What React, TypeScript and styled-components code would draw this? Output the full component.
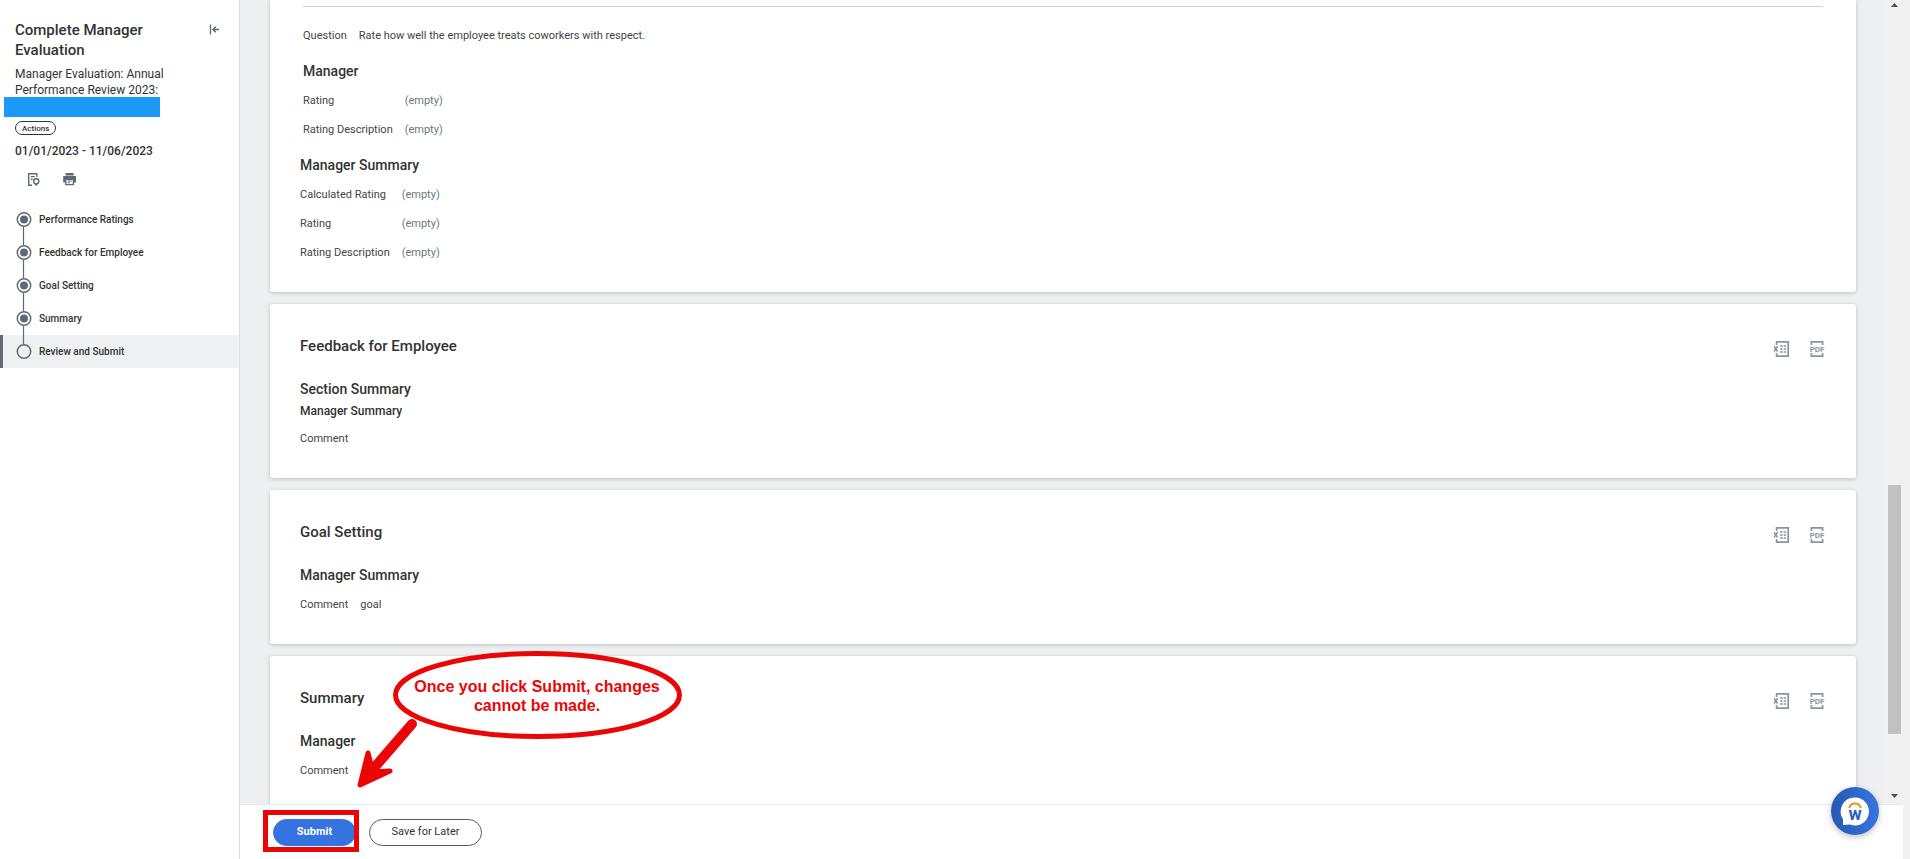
import React from "react";
import styled, { createGlobalStyle } from "styled-components";

const color = {
  ink: "#333333",
  label: "#444444",
  muted: "#6c7780",
  slate: "#5e6a75",
  icon: "#8a949e",
  canvas: "#eeeff1",
  track: "#f1f1f1",
  blue: "#3574e0",
  red: "#ea0606",
};

const GlobalStyle = createGlobalStyle`
  *, *::before, *::after { box-sizing: border-box; }
  body { margin: 0; background: #fff; color: ${color.ink}; font-family: Roboto, "Liberation Sans", sans-serif; }
  h1, h2, h3, h4, p, dl, dd, ol { margin: 0; padding: 0; }
  button { font-family: inherit; cursor: pointer; }
`;

const Shell = styled.div`
  display: grid;
  grid-template-columns: 240px minmax(0, 1fr) 7px;
  height: 100vh;
  overflow: hidden;
`;

/* ---------- sidebar ---------- */

const Sidebar = styled.aside`
  background: #fff;
  border-right: 1px solid #dcdee1;
`;

const Intro = styled.header`
  display: flex;
  flex-direction: column;
  align-items: flex-start;
  padding: 20px 16px 0 15px;
`;

const TitleRow = styled.div`
  display: flex;
  justify-content: space-between;
  align-self: stretch;
`;

const Title = styled.h1`
  width: 140px;
  font-size: 15px;
  font-weight: 500;
  line-height: 20px;
`;

const IconButton = styled.button`
  display: flex;
  width: 16px;
  height: 16px;
  padding: 0;
  border: 0;
  background: none;
  color: ${color.icon};
`;

const SideIconButton = styled(IconButton)`
  color: ${color.slate};
`;

const Subtitle = styled.p`
  margin-top: 6px;
  width: 160px;
  font-size: 12px;
  line-height: 16px;
`;

const Redaction = styled.div`
  width: 156px;
  height: 20px;
  margin: -1px 0 0 -11px;
  background: #1a9af5;
`;

const ActionsButton = styled.button`
  height: 14px;
  margin-top: 4px;
  padding: 0 6px;
  border: 1px solid ${color.ink};
  border-radius: 7px;
  background: #fff;
  color: ${color.ink};
  font-size: 8px;
  font-weight: 500;
  line-height: 11px;
`;

const Period = styled.p`
  margin-top: 8px;
  font-size: 12px;
  font-weight: 500;
  line-height: 16px;
`;

const SideTools = styled.div`
  display: flex;
  gap: 20px;
  padding: 12px 0 0 11px;
`;

const Steps = styled.ol`
  margin-top: 16px;
  list-style: none;
`;

const Step = styled.li<{ $current?: boolean }>`
  height: 33px;
  border-left: 3px solid ${(p) => (p.$current ? color.slate : "transparent")};
  background: ${(p) => (p.$current ? "#eef0f2" : "transparent")};
`;

const StepLink = styled.a`
  display: flex;
  align-items: center;
  gap: 7px;
  height: 33px;
  padding-left: 12px;
  color: ${color.ink};
  font-size: 10px;
  font-weight: 500;
  text-decoration: none;
`;

const Marker = styled.svg`
  display: block;
  flex: none;
  width: 17px;
  height: 33px;
`;

/* ---------- workspace ---------- */

const Workspace = styled.div`
  position: relative;
  display: grid;
  grid-template-rows: minmax(0, 1fr) auto;
  min-height: 0;
`;

const Viewport = styled.div`
  display: grid;
  grid-template-columns: minmax(0, 1fr) 19px;
  min-height: 0;
  overflow: hidden;
  background: ${color.canvas};
`;

const CardList = styled.main`
  display: flex;
  flex-direction: column;
  gap: 12px;
  min-height: 0;
  padding: 0 28px 0 30px;
  overflow: hidden;
`;

const Card = styled.section<{ $continued?: boolean }>`
  flex: none;
  padding: ${(p) => (p.$continued ? "6px" : "32px")} 30px 32px;
  border-radius: ${(p) => (p.$continued ? "0 0 3px 3px" : "3px")};
  background: #fff;
  box-shadow: 0 1px 4px rgba(31, 38, 46, 0.24);
`;

const CardHeader = styled.header`
  display: flex;
  align-items: flex-start;
  justify-content: space-between;
  margin-bottom: 22px;
`;

const CardTitle = styled.h2`
  font-size: 15px;
  font-weight: 500;
  line-height: 20px;
`;

const CardTools = styled.div`
  display: flex;
  gap: 20px;
  padding-top: 5px;
`;

const Heading = styled.h3`
  font-size: 14px;
  font-weight: 500;
  line-height: 20px;
`;

const SubHeading = styled.h4`
  margin-top: 4px;
  font-size: 12px;
  font-weight: 500;
  line-height: 16px;
`;

const Fields = styled.dl`
  display: grid;
  grid-template-columns: max-content minmax(0, 1fr);
  gap: 14px 12px;
  margin-top: 12px;
  color: ${color.label};
  font-size: 11px;
  line-height: 15px;
`;

const Value = styled.dd<{ $empty?: boolean }>`
  color: ${(p) => (p.$empty ? color.muted : color.label)};
`;

const Item = styled.div`
  display: flex;
  flex-direction: column;
  gap: 18px;
  margin: 0 3px 18px;
  padding-top: 9px;
  border-top: 1px solid #ced3d9;
`;

const ScrollTrack = styled.div`
  display: flex;
  flex-direction: column;
  align-items: center;
  padding: 3px 0 6px 1px;
  background: ${color.track};
`;

const Arrow = styled.svg`
  flex: none;
  width: 7px;
  height: 4px;
`;

const Space = styled.div<{ $grow: number }>`
  flex: ${(p) => p.$grow} 1 0;
`;

const Thumb = styled.div`
  flex: 249 1 0;
  width: 13px;
  background: #c1c1c1;
`;

const PageTrack = styled.div`
  background: ${color.track};
`;

const Footer = styled.footer`
  display: flex;
  align-items: flex-start;
  gap: 13px;
  height: 55px;
  padding: 14px 33px 0;
  border-top: 1px solid #e4ebeb;
  background: #fff;
`;

const FooterButton = styled.button<{ $primary?: boolean }>`
  height: 27px;
  min-width: ${(p) => (p.$primary ? 83 : 113)}px;
  padding: 0 16px 2px;
  border: 1px solid ${(p) => (p.$primary ? color.blue : "#5a5a5a")};
  border-radius: 14px;
  background: ${(p) => (p.$primary ? color.blue : "#fff")};
  color: ${(p) => (p.$primary ? "#fff" : color.ink)};
  font-size: 11px;
  font-weight: ${(p) => (p.$primary ? 700 : 400)};
`;

/* ---------- things drawn over the page ---------- */

const Highlighted = styled.div`
  position: relative;

  &::after {
    content: "";
    position: absolute;
    inset: -9px -3px -6px -10px;
    border: 5px solid ${color.red};
    pointer-events: none;
  }
`;

const Callout = styled.div`
  position: absolute;
  left: 116px;
  bottom: 70px;
  width: 328px;
  height: 140px;
  pointer-events: none;
`;

const CalloutArt = styled.svg`
  position: absolute;
  inset: 0;
  width: 100%;
  height: 100%;
`;

const CalloutText = styled.p`
  position: absolute;
  top: 28px;
  left: 37px;
  width: 288px;
  color: ${color.red};
  font-family: "Liberation Sans", sans-serif;
  font-size: 16px;
  font-weight: 700;
  line-height: 19px;
  text-align: center;
`;

const AssistantButton = styled.button`
  position: absolute;
  right: 24px;
  bottom: 24px;
  width: 48px;
  height: 48px;
  padding: 0;
  border: 0;
  border-radius: 50%;
  background: linear-gradient(90deg, #2659b2, #3874e2);
  box-shadow: 0 2px 6px rgba(0, 0, 0, 0.25);
`;

/* ---------- icons ---------- */

const CollapseIcon = () => (
  <svg width="16" height="16" viewBox="0 0 16 16" fill="none" stroke="currentColor">
    <path d="M3.5 4.5v10" strokeWidth="1.3" />
    <path d="M12 9.5H6.5M8.8 6.8L6.1 9.5l2.7 2.7" strokeWidth="1.5" />
  </svg>
);

const PreviewIcon = () => (
  <svg width="16" height="16" viewBox="0 0 16 16" fill="none" stroke="currentColor">
    <path d="M6 14.2H2.7V2.7h8.1V6M2 2.7h9.4M4.8 5.6h3.9M4.8 8.2h1.8" strokeWidth="1.4" />
    <circle cx="10.2" cy="10.3" r="2.6" strokeWidth="1.4" />
    <path d="M9 12.6h2.4v1.9H9z" fill="currentColor" stroke="none" />
  </svg>
);

const PrintIcon = () => (
  <svg width="16" height="16" viewBox="0 0 16 16" fill="none">
    <path d="M3.6 2h8v2.4h-8zM1.2 5H14v6.6h-2V8H3.2v3.6h-2z" fill="currentColor" />
    <path d="M3.8 8.2h7.6v5.4H3.8z" stroke="currentColor" strokeWidth="1.4" />
    <path d="M5.6 10h4M5.6 11.8H8" stroke="currentColor" />
  </svg>
);

const ExcelIcon = () => (
  <svg width="16" height="16" viewBox="0 0 16 16" fill="none" stroke="currentColor">
    <path d="M2.6 4V.9h11.6v14.2H2.6V12" strokeWidth="1.7" />
    <path d="M0 5.3l3.6 5.2M3.6 5.3L0 10.5" strokeWidth="1.7" />
    <path d="M6 5h2.6M9.6 5h2.5M6 8h2.6M9.6 8h2.5M6 11h2.6M9.6 11h2.5" strokeWidth="1.5" />
  </svg>
);

const PdfIcon = () => (
  <svg width="16" height="16" viewBox="0 0 16 16" fill="none" stroke="currentColor">
    <path d="M1.4 4V.9h11.2V4M1.4 12v3.1h11.2V12" strokeWidth="1.7" />
    <text x="7" y="10.8" fill="currentColor" stroke="none" fontFamily="Roboto" fontSize="8" fontWeight="700" textAnchor="middle">
      PDF
    </text>
  </svg>
);

const AssistantIcon = () => (
  <svg width="48" height="48" viewBox="0 0 48 48">
    <path d="M24 10.5a14 14 0 1 1-5 27.1l-7 .4v-5.8A14 14 0 0 1 24 10.5z" fill="#fff" />
    <path d="M18.2 21a6 6 0 0 1 11.6 0" fill="none" stroke="#f08c1e" strokeWidth="2" />
    <text x="24" y="33" fill="#2a5fc0" fontFamily="Roboto" fontSize="18" fontWeight="700" textAnchor="middle">
      w
    </text>
  </svg>
);

/* ---------- content ---------- */

type Field = { label: string; value?: string };

const EMPTY = "(empty)";

const STEPS = ["Performance Ratings", "Feedback for Employee", "Goal Setting", "Summary", "Review and Submit"];

const FieldList = ({ fields }: { fields: Field[] }) => (
  <Fields>
    {fields.map(({ label, value }) => (
      <React.Fragment key={label}>
        <dt>{label}</dt>
        <Value $empty={value === EMPTY}>{value}</Value>
      </React.Fragment>
    ))}
  </Fields>
);

const StepMarker = ({ index }: { index: number }) => {
  const last = index === STEPS.length - 1;
  return (
    <Marker viewBox="0 0 17 33" fill="none" stroke={color.slate}>
      {index > 0 && <path d="M8.5 0v9" strokeWidth="1.2" />}
      {!last && <path d="M8.5 24v9" strokeWidth="1.2" />}
      <circle cx="9" cy="16.5" r="6.7" strokeWidth="1.5" />
      {!last && <circle cx="9" cy="16.5" r="4" fill={color.slate} stroke="none" />}
    </Marker>
  );
};

const SectionHeader = ({ title }: { title: string }) => (
  <CardHeader>
    <CardTitle>{title}</CardTitle>
    <CardTools>
      <IconButton type="button" aria-label={`Export ${title} to Excel`}>
        <ExcelIcon />
      </IconButton>
      <IconButton type="button" aria-label={`Export ${title} to PDF`}>
        <PdfIcon />
      </IconButton>
    </CardTools>
  </CardHeader>
);

export default function App() {
  return (
    <>
      <GlobalStyle />
      <Shell>
        <Sidebar>
          <Intro>
            <TitleRow>
              <Title>Complete Manager Evaluation</Title>
              <SideIconButton type="button" aria-label="Collapse panel">
                <CollapseIcon />
              </SideIconButton>
            </TitleRow>
            <Subtitle>Manager Evaluation: Annual Performance Review 2023:</Subtitle>
            <Redaction />
            <ActionsButton type="button">Actions</ActionsButton>
            <Period>01/01/2023 - 11/06/2023</Period>
            <SideTools>
              <SideIconButton type="button" aria-label="Preview">
                <PreviewIcon />
              </SideIconButton>
              <SideIconButton type="button" aria-label="Print">
                <PrintIcon />
              </SideIconButton>
            </SideTools>
          </Intro>
          <nav aria-label="Steps">
            <Steps>
              {STEPS.map((step, index) => (
                <Step key={step} $current={index === STEPS.length - 1}>
                  <StepLink href="#">
                    <StepMarker index={index} />
                    {step}
                  </StepLink>
                </Step>
              ))}
            </Steps>
          </nav>
        </Sidebar>

        <Workspace>
          <Viewport>
            <CardList>
              <Card $continued>
                <Item>
                  <FieldList
                    fields={[{ label: "Question", value: "Rate how well the employee treats coworkers with respect." }]}
                  />
                  <div>
                    <Heading>Manager</Heading>
                    <FieldList
                      fields={[
                        { label: "Rating", value: EMPTY },
                        { label: "Rating Description", value: EMPTY },
                      ]}
                    />
                  </div>
                </Item>
                <Heading>Manager Summary</Heading>
                <FieldList
                  fields={[
                    { label: "Calculated Rating", value: EMPTY },
                    { label: "Rating", value: EMPTY },
                    { label: "Rating Description", value: EMPTY },
                  ]}
                />
              </Card>

              <Card>
                <SectionHeader title="Feedback for Employee" />
                <Heading>Section Summary</Heading>
                <SubHeading>Manager Summary</SubHeading>
                <FieldList fields={[{ label: "Comment" }]} />
              </Card>

              <Card>
                <SectionHeader title="Goal Setting" />
                <Heading>Manager Summary</Heading>
                <FieldList fields={[{ label: "Comment", value: "goal" }]} />
              </Card>

              <Card>
                <SectionHeader title="Summary" />
                <Heading>Manager</Heading>
                <FieldList fields={[{ label: "Comment" }]} />
              </Card>
            </CardList>

            <ScrollTrack aria-hidden="true">
              <Arrow viewBox="0 0 7 4">
                <path d="M0 4L3.5 0 7 4z" fill="#505050" />
              </Arrow>
              <Space $grow={478} />
              <Thumb />
              <Space $grow={60} />
              <Arrow viewBox="0 0 7 4">
                <path d="M0 0L3.5 4 7 0z" fill="#505050" />
              </Arrow>
            </ScrollTrack>
          </Viewport>

          <Footer>
            <Highlighted>
              <FooterButton type="button" $primary>
                Submit
              </FooterButton>
            </Highlighted>
            <FooterButton type="button">Save for Later</FooterButton>
          </Footer>

          <Callout>
            <CalloutArt viewBox="0 0 328 140" fill="none" stroke={color.red}>
              <ellipse cx="181.5" cy="46" rx="142" ry="41.5" strokeWidth="5" />
              <path d="M56 75L18 119" strokeWidth="10" strokeLinecap="round" />
              <path
                d="M12 104L4 136 34 122 17 123z"
                fill={color.red}
                strokeWidth="5"
                strokeLinejoin="round"
                strokeLinecap="round"
              />
            </CalloutArt>
            <CalloutText>
              Once you click Submit, changes
              <br />
              cannot be made.
            </CalloutText>
          </Callout>

          <AssistantButton type="button" aria-label="Open assistant">
            <AssistantIcon />
          </AssistantButton>
        </Workspace>

        <PageTrack aria-hidden="true" />
      </Shell>
    </>
  );
}
